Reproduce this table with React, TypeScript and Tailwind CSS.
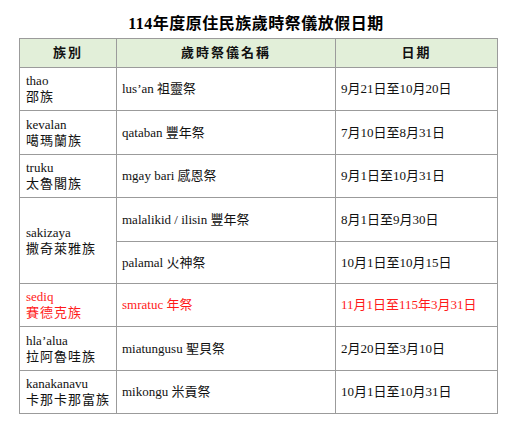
const font = {
  fontFamily: '"Liberation Serif", "Noto Sans CJK TC", serif',
}

type Row = {
  tribe: string
  tribeZh: string
  items: { name: string; date: string; h: number }[]
  red?: boolean
}

const rows: Row[] = [
  { tribe: 'thao', tribeZh: '邵族', items: [{ name: 'lus’an 祖靈祭', date: '9月21日至10月20日', h: 43 }] },
  { tribe: 'kevalan', tribeZh: '噶瑪蘭族', items: [{ name: 'qataban 豐年祭', date: '7月10日至8月31日', h: 44 }] },
  { tribe: 'truku', tribeZh: '太魯閣族', items: [{ name: 'mgay bari 感恩祭', date: '9月1日至10月31日', h: 43 }] },
  {
    tribe: 'sakizaya',
    tribeZh: '撒奇萊雅族',
    items: [
      { name: 'malalikid / ilisin 豐年祭', date: '8月1日至9月30日', h: 44 },
      { name: 'palamal 火神祭', date: '10月1日至10月15日', h: 42 },
    ],
  },
  { tribe: 'sediq', tribeZh: '賽德克族', red: true, items: [{ name: 'smratuc 年祭', date: '11月1日至115年3月31日', h: 43 }] },
  { tribe: 'hla’alua', tribeZh: '拉阿魯哇族', items: [{ name: 'miatungusu 聖貝祭', date: '2月20日至3月10日', h: 44 }] },
  { tribe: 'kanakanavu', tribeZh: '卡那卡那富族', items: [{ name: 'mikongu 米貢祭', date: '10月1日至10月31日', h: 43 }] },
]

export default function App() {
  return (
    <div className="w-[512px] h-[424px] bg-white" style={font}>
      <h1 className="pt-[14px] h-[38px] text-center text-[16px] font-bold leading-[20px] tracking-[0.5px] text-black">
        114年度原住民族歲時祭儀放假日期
      </h1>
      <table className="ml-[19px] w-[478px] border-collapse table-fixed text-[13px] text-[#111]">
        <colgroup>
          <col className="w-[97px]" />
          <col className="w-[219px]" />
          <col className="w-[162px]" />
        </colgroup>
        <thead>
          <tr className="h-[29px] bg-[#e2efd9]">
            <th className="border border-[#9b9b9b] font-bold tracking-[2px]">族別</th>
            <th className="border border-[#9b9b9b] font-bold tracking-[2px]">歲時祭儀名稱</th>
            <th className="border border-[#9b9b9b] font-bold tracking-[2px]">日期</th>
          </tr>
        </thead>
        <tbody>
          {rows.map((r) =>
            r.items.map((it, i) => (
              <tr key={r.tribe + i} style={{ height: it.h }} className={r.red ? 'text-[#ff1a1a]' : ''}>
                {i === 0 && (
                  <td rowSpan={r.items.length} className="border border-[#9b9b9b] pl-[6px] leading-[16px] align-middle">
                    <div>{r.tribe}</div>
                    <div className="tracking-[1px]">{r.tribeZh}</div>
                  </td>
                )}
                <td className="border border-[#9b9b9b] pl-[5px] align-middle">{it.name}</td>
                <td className="border border-[#9b9b9b] pl-[5px] align-middle">{it.date}</td>
              </tr>
            ))
          )}
        </tbody>
      </table>
    </div>
  )
}
